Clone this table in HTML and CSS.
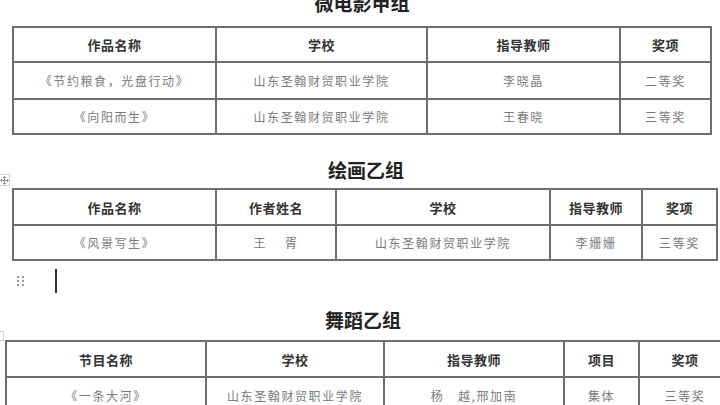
FILE: index.html
```html
<!DOCTYPE html>
<html lang="zh">
<head>
<meta charset="utf-8">
<title>获奖名单</title>
<link rel="stylesheet" href="styles.css">
</head>
<body>
<div class="page">
  <h2 class="title t1">微电影甲组</h2>
  <div class="tbl-wrap w1">
    <table class="grid g1">
      <colgroup><col style="width:203px"><col style="width:211px"><col style="width:193px"><col style="width:91px"></colgroup>
      <tr class="head h35"><th>作品名称</th><th>学校</th><th>指导教师</th><th>奖项</th></tr>
      <tr class="h37"><td>《节约粮食，光盘行动》</td><td>山东圣翰财贸职业学院</td><td>李晓晶</td><td>二等奖</td></tr>
      <tr class="h35"><td>《向阳而生》</td><td>山东圣翰财贸职业学院</td><td>王春晓</td><td>三等奖</td></tr>
    </table>
  </div>

  <h2 class="title t2">绘画乙组</h2>
  <div class="tbl-wrap w2">
    <span class="move"><svg width="9" height="9" viewBox="0 0 9 9"><path d="M4.5 0.5v8M0.5 4.5h8M3 2l1.5-1.5L6 2M3 7l1.5 1.5L6 7M2 3L0.5 4.5 2 6M7 3l1.5 1.5L7 6" fill="none" stroke="#888" stroke-width="0.9"/></svg></span>
    <table class="grid g2">
      <colgroup><col style="width:203px"><col style="width:120px"><col style="width:214px"><col style="width:92px"><col style="width:75px"></colgroup>
      <tr class="head h36"><th>作品名称</th><th>作者姓名</th><th>学校</th><th>指导教师</th><th>奖项</th></tr>
      <tr class="h35"><td>《风景写生》</td><td>王　 胥</td><td>山东圣翰财贸职业学院</td><td>李姗姗</td><td>三等奖</td></tr>
    </table>
  </div>

  <div class="caret-line">
    <span class="dots"><i></i><i></i><i></i><i></i><i></i><i></i></span>
    <span class="caret"></span>
  </div>

  <h2 class="title t3">舞蹈乙组</h2>
  <div class="tbl-wrap w3">
    <span class="move move3"></span>
    <table class="grid g3">
      <colgroup><col style="width:200px"><col style="width:178px"><col style="width:180px"><col style="width:75px"><col style="width:92px"></colgroup>
      <tr class="head h36"><th>节目名称</th><th>学校</th><th>指导教师</th><th>项目</th><th>奖项</th></tr>
      <tr class="h36"><td>《一条大河》</td><td>山东圣翰财贸职业学院</td><td>杨　越,邢加南</td><td>集体</td><td>三等奖</td></tr>
    </table>
  </div>
</div>
</body>
</html>
```

FILE: styles.css
```css
html, body {
  margin: 0;
  padding: 0;
  background: #ffffff;
  overflow: hidden;
}
body {
  width: 720px;
  height: 405px;
  font-family: "Noto Sans CJK SC", "Noto Sans", sans-serif;
  color: #333;
}
.page {
  display: flex;
  flex-direction: column;
}
.title {
  margin: 0;
  font-size: 19px;
  line-height: 20px;
  height: 20px;
  font-weight: 700;
  color: #222;
  text-align: center;
}
.t1 { margin-top: -7px; padding-left: 4px; }
.t2 { margin-top: 25px; padding-left: 12px; }
.t3 { margin-top: 16px; padding-left: 6px; }

.tbl-wrap { position: relative; }
.w1 { margin-top: 13px; padding-left: 12px; }
.w2 { margin-top: 8px; padding-left: 12px; }
.w3 { margin-top: 10px; padding-left: 5px; }

.grid {
  border-collapse: collapse;
  table-layout: fixed;
}
.g1 { width: 698px; }
.g2 { width: 704px; }
.g3 { width: 725px; }
.grid th, .grid td {
  border: 2px solid #6e6e6e;
  text-align: center;
  padding: 0;
  white-space: nowrap;
  overflow: hidden;
}
.grid th {
  font-size: 13px;
  font-weight: 700;
  color: #333;
  letter-spacing: 0.5px;
}
.grid td {
  font-size: 12px;
  font-weight: 400;
  color: #7a7a7a;
  letter-spacing: 1.6px;
}
.h35 { height: 35px; }
.h36 { height: 36px; }
.h37 { height: 37px; }

.move {
  position: absolute;
  left: 0;
  top: -14px;
  width: 10px;
  height: 12px;
  border: 1px solid #d4d4d4;
  border-left: none;
  background: #fff;
  box-sizing: border-box;
  display: flex;
  align-items: center;
  justify-content: center;
}
.move3 {
  top: -9px;
  width: 4px;
  height: 10px;
}

.caret-line {
  height: 33px;
  display: flex;
  align-items: flex-start;
  padding-left: 17px;
  gap: 31px;
  padding-top: 8px;
  box-sizing: border-box;
}
.dots {
  margin-top: 7px;
  width: 7px;
  display: grid;
  grid-template-columns: 2px 2px;
  column-gap: 3px;
  row-gap: 2px;
}
.dots i {
  display: block;
  width: 2px;
  height: 2px;
  background: #9a9a9a;
}
.caret {
  width: 2px;
  height: 24px;
  background: #333;
}
```
